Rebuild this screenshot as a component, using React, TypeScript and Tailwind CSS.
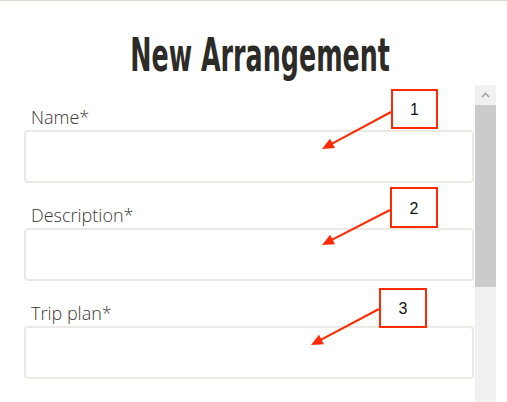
const FIELDS = [
  { label: "Name*" },
  { label: "Description*" },
  { label: "Trip plan*" },
];

const CALLOUTS = [
  { n: "1", box: { x: 392, y: 89, w: 45, h: 38 }, from: [391, 111], to: [322, 148] },
  { n: "2", box: { x: 391, y: 187, w: 46, h: 39 }, from: [390, 209], to: [322, 244] },
  { n: "3", box: { x: 380, y: 288, w: 46, h: 38 }, from: [379, 308], to: [311, 344] },
];

function Arrow({ from, to }: { from: number[]; to: number[] }) {
  const [x1, y1] = from;
  const [x2, y2] = to;
  const a = Math.atan2(y2 - y1, x2 - x1);
  const len = 13;
  const spread = 0.42;
  const p1 = [x2 - len * Math.cos(a - spread), y2 - len * Math.sin(a - spread)];
  const p2 = [x2 - len * Math.cos(a + spread), y2 - len * Math.sin(a + spread)];
  const bx = x2 - (len - 2) * Math.cos(a);
  const by = y2 - (len - 2) * Math.sin(a);
  return (
    <g>
      <line x1={x1} y1={y1} x2={bx} y2={by} stroke="#ff2a00" strokeWidth={2} />
      <polygon points={`${x2},${y2} ${p1[0]},${p1[1]} ${p2[0]},${p2[1]}`} fill="#ff2a00" />
    </g>
  );
}

export default function App() {
  return (
    <div className="relative w-[507px] h-[402px] overflow-hidden bg-white border-t border-[#ddd7cf]">
      <h1
        className="mt-[30px] pl-[22px] text-center text-[47px] leading-none font-bold text-[#2d2b27] scale-x-[0.6]"
        style={{ fontFamily: '"Liberation Sans Narrow", "DejaVu Sans Condensed", "Liberation Sans", sans-serif' }}
      >
        New Arrangement
      </h1>

      <div className="mt-[7px] flex h-[318px]">
        <div className="w-[474px] pl-[24px] pt-[20px] flex flex-col">
          {FIELDS.map((f) => (
            <div key={f.label} className="mb-[20px] flex flex-col">
              <label className="h-[25px] pl-[7px] text-[18px] leading-[24px] font-light text-[#3a3835] font-['Open_Sans',sans-serif]">
                {f.label}
              </label>
              <div className="h-[53px] w-full rounded-[4px] border-2 border-[#ece8e3] bg-white" />
            </div>
          ))}
        </div>

        <div className="ml-[1px] w-[21px] flex flex-col bg-[#f1f1f1]">
          <div className="h-[20px] flex items-center justify-center">
            <svg width="9" height="6" viewBox="0 0 9 6">
              <path d="M1 5 L4.5 1.5 L8 5" fill="none" stroke="#a3a3a3" strokeWidth="1.6" />
            </svg>
          </div>
          <div className="h-[182px] bg-[#cbcbcb]" />
        </div>
      </div>

      <svg className="absolute inset-0 pointer-events-none" width="507" height="402">
        {CALLOUTS.map((c) => (
          <g key={c.n}>
            <rect x={c.box.x} y={c.box.y} width={c.box.w} height={c.box.h} fill="white" stroke="#ff2a00" strokeWidth={2} />
            <text
              x={c.box.x + c.box.w / 2}
              y={c.box.y + c.box.h / 2 + 6}
              textAnchor="middle"
              fontSize="16"
              fill="#111"
              fontFamily='"Liberation Sans", Arial, sans-serif'
            >
              {c.n}
            </text>
            <Arrow from={c.from} to={c.to} />
          </g>
        ))}
      </svg>
    </div>
  );
}
